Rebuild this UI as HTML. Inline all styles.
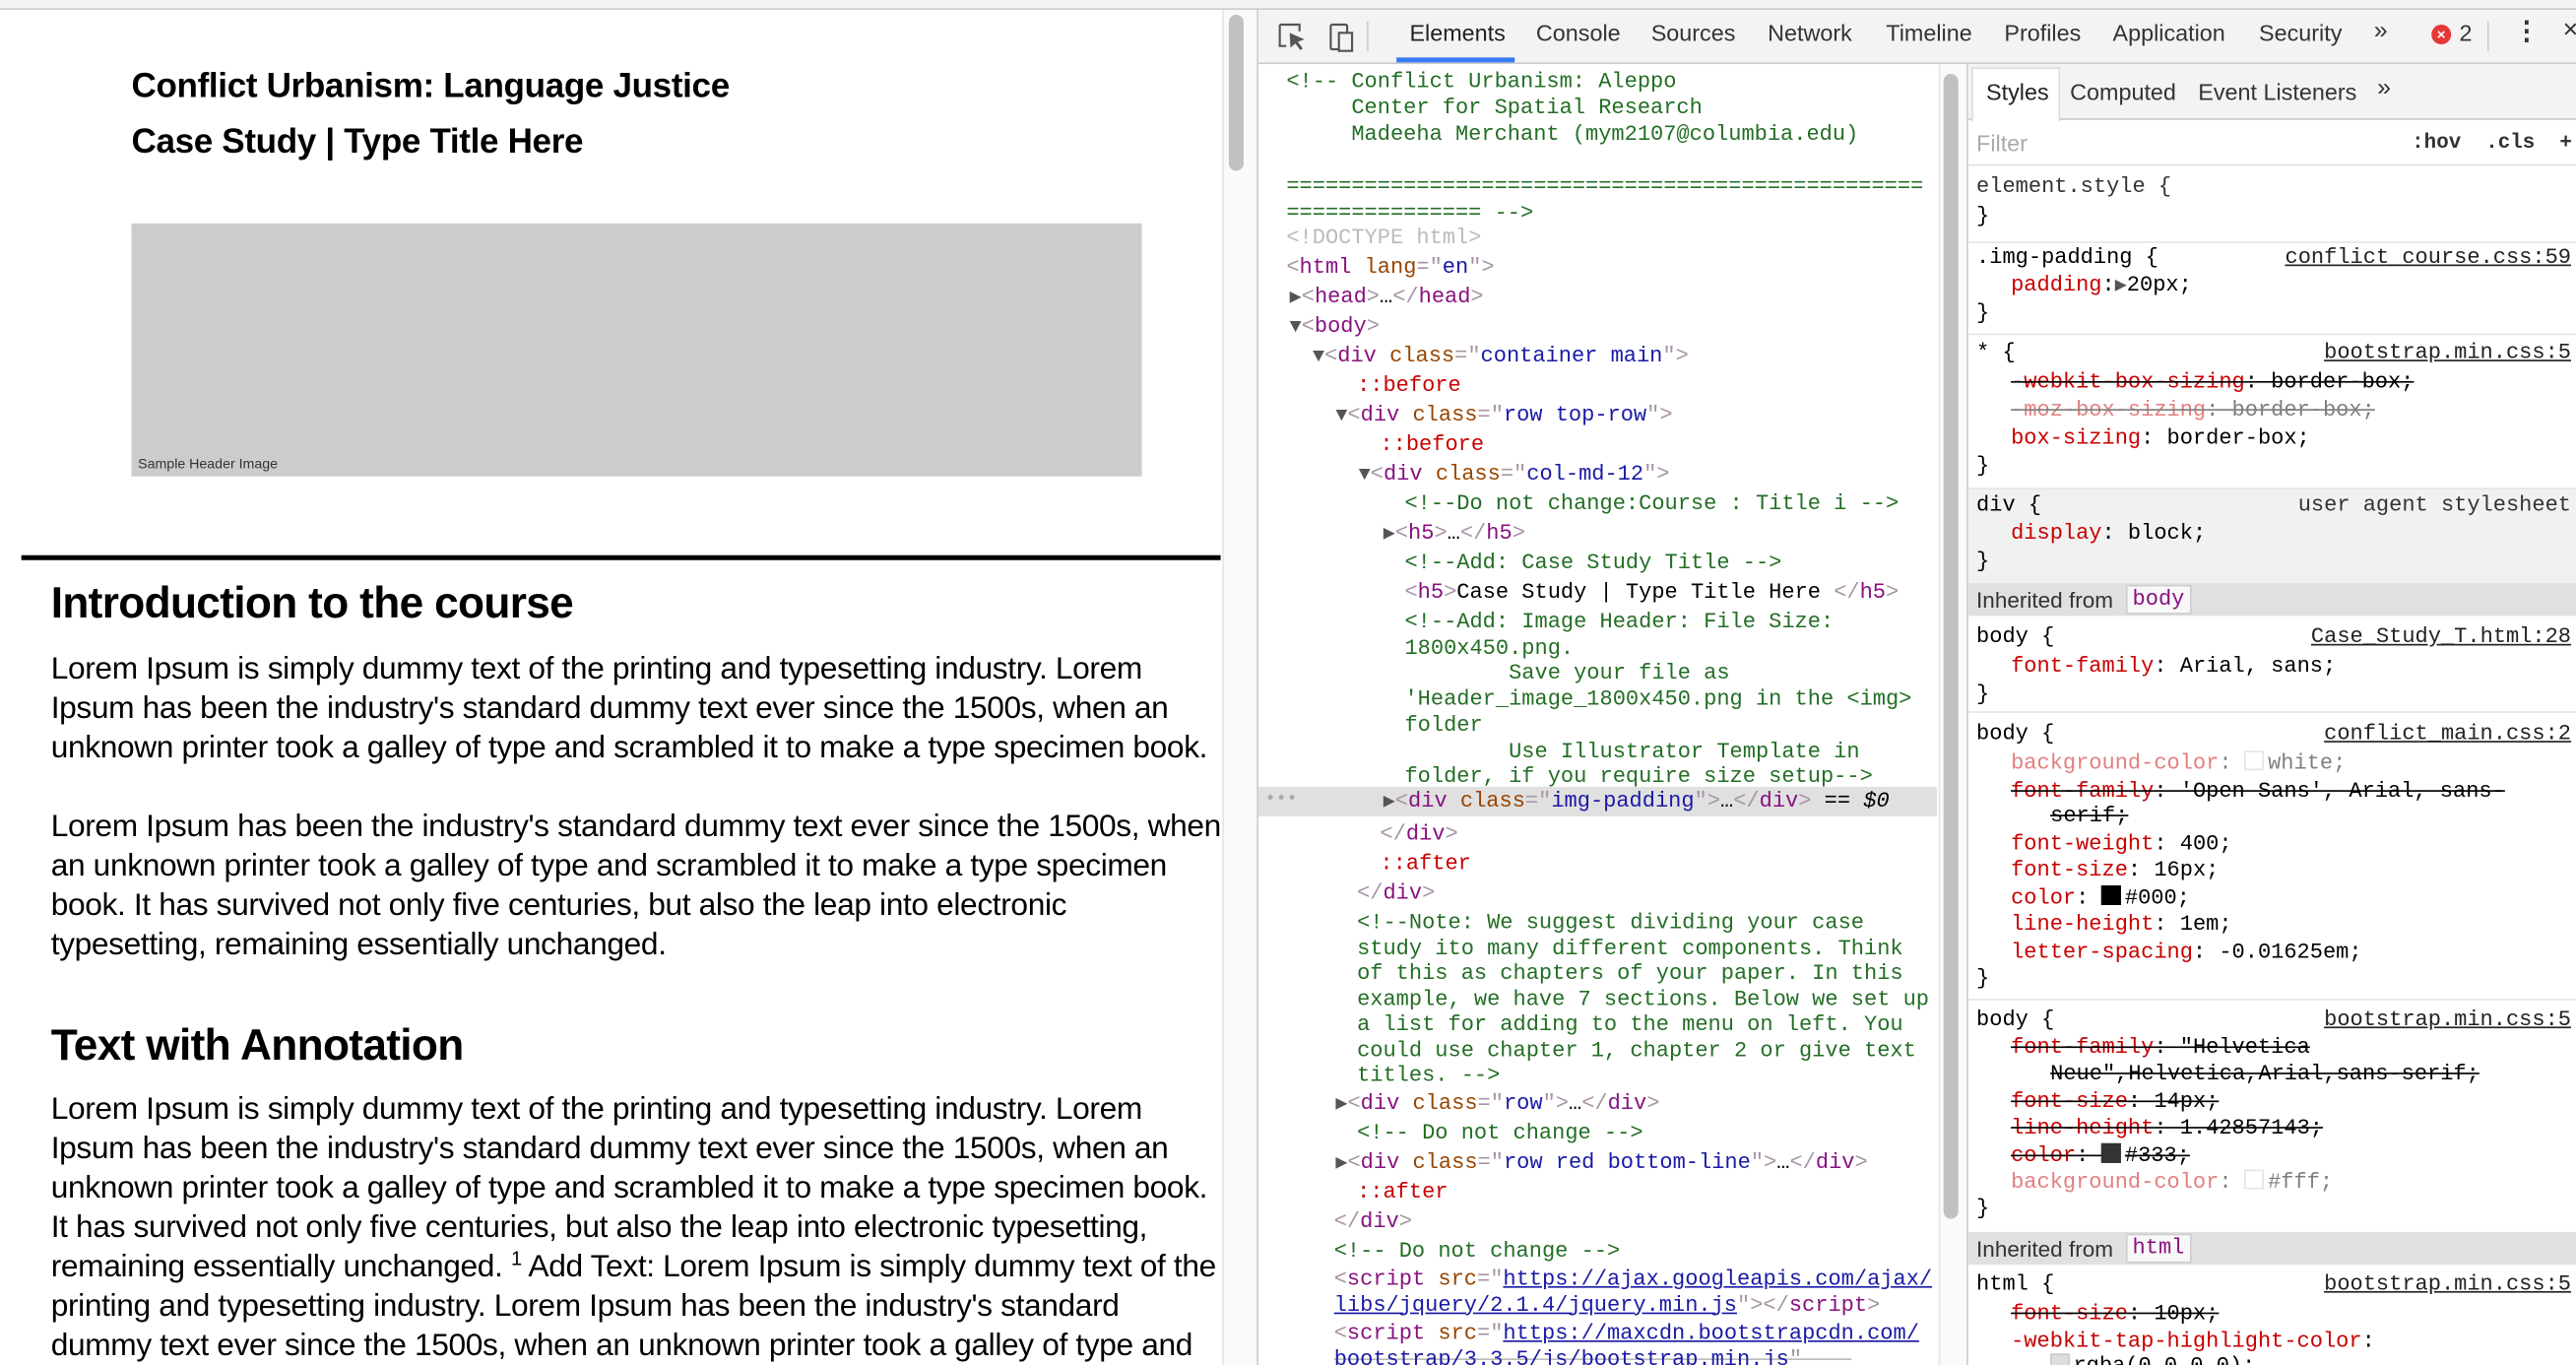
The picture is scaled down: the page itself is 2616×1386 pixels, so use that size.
<!DOCTYPE html>
<html><head><meta charset="utf-8">
<style>
html,body{margin:0;padding:0;width:2616px;height:1386px;overflow:hidden;background:#fff}
#w{position:absolute;left:0;top:0;width:1568px;height:831px;transform:scale(1.66837,1.66787);transform-origin:0 0;overflow:hidden;background:#fff}
.a{position:absolute;white-space:pre}
.s{font-family:"Liberation Sans",Arial,sans-serif}
.m{font-family:"Liberation Mono","DejaVu Sans Mono",monospace;font-size:13.2px;line-height:18px;height:18px}
.p{font-family:"Liberation Sans",Arial,sans-serif;font-size:19px;letter-spacing:-0.22px;color:#000}
.h2{font-family:"Liberation Sans",Arial,sans-serif;font-size:26.5px;font-weight:bold;letter-spacing:-0.4px}
.tg{color:#881280}.br{color:#a894a6}.at{color:#994500}.av{color:#1a1aa6}.cm{color:#236e25}.ps{color:#c80000}.dt{color:#bbb}
.tri{color:#555;font-size:12px}
.pr{color:#c80000}.val{color:#222}.st{text-decoration:line-through}.fd{opacity:.5}
.lnk{color:#222;text-decoration:underline;right:3px}
.sw{display:inline-block;width:10px;height:10px;border:1px solid #ccc;vertical-align:-1px;margin-right:2px}
.tab{position:absolute;top:12px;font-family:"Liberation Sans",Arial,sans-serif;font-size:14px;color:#333}
.u{text-decoration:underline}
#el,#sty{position:absolute;left:0;top:2px;width:1568px;height:831px}
</style></head><body><div id="w">
<div class="a" style="left:0;top:0;width:1568px;height:5px;background:#f3f3f3;border-bottom:1px solid #ccc"></div>
<div class="a s" style="left:80px;top:41px;font-size:21px;font-weight:bold;letter-spacing:-0.2px">Conflict Urbanism: Language Justice</div>
<div class="a s" style="left:80px;top:75px;font-size:21px;font-weight:bold;letter-spacing:-0.2px">Case Study | Type Title Here</div>
<div class="a" style="left:80px;top:136px;width:615px;height:154px;background:#cccccc"></div>
<div class="a s" style="left:84px;top:277px;font-size:8.5px;color:#333">Sample Header Image</div>
<div class="a" style="left:13px;top:338px;width:730px;height:3px;background:#000"></div>
<div class="a h2" style="left:31px;top:352px">Introduction to the course</div>
<div class="a p" style="left:31px;top:396px;line-height:24px">Lorem Ipsum is simply dummy text of the printing and typesetting industry. Lorem
Ipsum has been the industry's standard dummy text ever since the 1500s, when an
unknown printer took a galley of type and scrambled it to make a type specimen book.</div>
<div class="a p" style="left:31px;top:492px;line-height:24px">Lorem Ipsum has been the industry's standard dummy text ever since the 1500s, when
an unknown printer took a galley of type and scrambled it to make a type specimen
book. It has survived not only five centuries, but also the leap into electronic
typesetting, remaining essentially unchanged.</div>
<div class="a h2" style="left:31px;top:621px">Text with Annotation</div>
<div class="a p" style="left:31px;top:664px;line-height:24px">Lorem Ipsum is simply dummy text of the printing and typesetting industry. Lorem
Ipsum has been the industry's standard dummy text ever since the 1500s, when an
unknown printer took a galley of type and scrambled it to make a type specimen book.
It has survived not only five centuries, but also the leap into electronic typesetting,
remaining essentially unchanged. <span style="font-size:12px;position:relative;top:-7px;line-height:0">1</span> Add Text: Lorem Ipsum is simply dummy text of the
printing and typesetting industry. Lorem Ipsum has been the industry's standard
dummy text ever since the 1500s, when an unknown printer took a galley of type and</div>
<div class="a" style="left:744px;top:6px;width:20px;height:825px;background:#fafafa;border-left:1px solid #e6e6e6"></div>
<div class="a" style="left:748px;top:9px;width:9px;height:95px;background:#c1c1c1;border-radius:5px"></div>
<div class="a" style="left:765px;top:6px;width:803px;height:825px;background:#fff;border-left:1px solid #ccc"></div>
<div class="a" style="left:766px;top:6px;width:802px;height:32px;background:#f3f3f3;border-bottom:1px solid #ccc"></div>
<svg class="a" style="left:776px;top:12px" width="60" height="22" viewBox="0 0 60 22"><path d="M3 3h12v4M3 3v13h4" fill="none" stroke="#555" stroke-width="1.3"/><path d="M9 8l9 4-4 1.5 3 4-1.5 1-3-4-3 2.5z" fill="#555"/><rect x="34" y="3" width="10" height="15" rx="1" fill="none" stroke="#555" stroke-width="1.3"/><rect x="39" y="8" width="8" height="11" fill="#f3f3f3" stroke="#555" stroke-width="1.3"/></svg>
<div class="a" style="left:832px;top:13px;width:1px;height:18px;background:#ccc"></div>
<div class="tab" style="left:858px;color:#222">Elements</div>
<div class="a" style="left:850px;top:35px;width:72px;height:3px;background:#3879f5"></div>
<div class="tab" style="left:935px">Console</div>
<div class="tab" style="left:1005px">Sources</div>
<div class="tab" style="left:1076px">Network</div>
<div class="tab" style="left:1148px">Timeline</div>
<div class="tab" style="left:1220px">Profiles</div>
<div class="tab" style="left:1286px">Application</div>
<div class="tab" style="left:1375px">Security</div>
<div class="tab" style="left:1445px;font-size:15px;top:10px">»</div>
<div class="a" style="left:1480px;top:15px;width:12px;height:12px;border-radius:6px;background:#e53935;color:#fff;font:bold 9px/12px 'Liberation Sans',sans-serif;text-align:center">×</div>
<div class="tab" style="left:1497px">2</div>
<div class="a" style="left:1514px;top:13px;width:1px;height:18px;background:#ccc"></div>
<div class="tab" style="left:1530px;font-weight:bold;font-size:16px;top:9px">⋮</div>
<div class="tab" style="left:1560px;font-size:16px;top:10px">×</div>
<div class="a" style="left:1180px;top:39px;width:16px;height:792px;background:#fafafa;border-left:1px solid #e6e6e6"></div>
<div class="a" style="left:1183px;top:45px;width:9px;height:697px;background:#c1c1c1;border-radius:5px"></div>
<div class="a" style="left:1197px;top:39px;width:1px;height:792px;background:#ccc"></div>
<div class="a" style="left:766px;top:479px;width:413px;height:18px;background:#e0e0e0"></div>
<div class="a" style="left:812px;top:827px;width:315px;height:4px;background:#fff;border-top:1px solid #bbb"></div>
<div id="el">
<div class="a m" style="left:770px;top:476px;color:#aaa;font-size:11px">•••</div>
<div class="a m cm" style="left:783px;top:40px;line-height:16px;height:auto">&lt;!-- Conflict Urbanism: Aleppo
     Center for Spatial Research
     Madeeha Merchant (mym2107@columbia.edu)

=================================================
=============== --&gt;</div>
<div class="a m dt" style="left:783px;top:134px">&lt;!DOCTYPE html&gt;</div>
<div class="a m" style="left:783px;top:152px"><span class="br">&lt;</span><span class="tg">html</span> <span class="at">lang</span><span class="br">="</span><span class="av">en</span><span class="br">"&gt;</span></div>
<div class="a m" style="left:785px;top:170px"><span class="tri">▶</span><span class="br">&lt;</span><span class="tg">head</span><span class="br">&gt;</span>…<span class="br">&lt;/</span><span class="tg">head</span><span class="br">&gt;</span></div>
<div class="a m" style="left:785px;top:188px"><span class="tri">▼</span><span class="br">&lt;</span><span class="tg">body</span><span class="br">&gt;</span></div>
<div class="a m" style="left:799px;top:206px"><span class="tri">▼</span><span class="br">&lt;</span><span class="tg">div</span> <span class="at">class</span><span class="br">="</span><span class="av">container main</span><span class="br">"&gt;</span></div>
<div class="a m ps" style="left:826px;top:224px">::before</div>
<div class="a m" style="left:813px;top:242px"><span class="tri">▼</span><span class="br">&lt;</span><span class="tg">div</span> <span class="at">class</span><span class="br">="</span><span class="av">row top-row</span><span class="br">"&gt;</span></div>
<div class="a m ps" style="left:840px;top:260px">::before</div>
<div class="a m" style="left:827px;top:278px"><span class="tri">▼</span><span class="br">&lt;</span><span class="tg">div</span> <span class="at">class</span><span class="br">="</span><span class="av">col-md-12</span><span class="br">"&gt;</span></div>
<div class="a m cm" style="left:855px;top:296px">&lt;!--Do not change:Course : Title i --&gt;</div>
<div class="a m" style="left:842px;top:314px"><span class="tri">▶</span><span class="br">&lt;</span><span class="tg">h5</span><span class="br">&gt;</span>…<span class="br">&lt;/</span><span class="tg">h5</span><span class="br">&gt;</span></div>
<div class="a m cm" style="left:855px;top:332px">&lt;!--Add: Case Study Title --&gt;</div>
<div class="a m" style="left:855px;top:350px"><span class="br">&lt;</span><span class="tg">h5</span><span class="br">&gt;</span>Case Study | Type Title Here <span class="br">&lt;/</span><span class="tg">h5</span><span class="br">&gt;</span></div>
<div class="a m cm" style="left:855px;top:369px;line-height:15.7px;height:auto">&lt;!--Add: Image Header: File Size:
1800x450.png.
        Save your file as
'Header_image_1800x450.png in the &lt;img&gt;
folder
        Use Illustrator Template in
folder, if you require size setup--&gt;</div>
<div class="a m" style="left:842px;top:477px"><span class="tri">▶</span><span class="br">&lt;</span><span class="tg">div</span> <span class="at">class</span><span class="br">="</span><span class="av">img-padding</span><span class="br">"&gt;</span>…<span class="br">&lt;/</span><span class="tg">div</span><span class="br">&gt;</span> == <i>$0</i></div>
<div class="a m" style="left:840px;top:497px"><span class="br">&lt;/</span><span class="tg">div</span><span class="br">&gt;</span></div>
<div class="a m ps" style="left:840px;top:515px">::after</div>
<div class="a m" style="left:826px;top:533px"><span class="br">&lt;/</span><span class="tg">div</span><span class="br">&gt;</span></div>
<div class="a m cm" style="left:826px;top:552px;line-height:15.5px;height:auto">&lt;!--Note: We suggest dividing your case
study ito many different components. Think
of this as chapters of your paper. In this
example, we have 7 sections. Below we set up
a list for adding to the menu on left. You
could use chapter 1, chapter 2 or give text
titles. --&gt;</div>
<div class="a m" style="left:813px;top:661px"><span class="tri">▶</span><span class="br">&lt;</span><span class="tg">div</span> <span class="at">class</span><span class="br">="</span><span class="av">row</span><span class="br">"&gt;</span>…<span class="br">&lt;/</span><span class="tg">div</span><span class="br">&gt;</span></div>
<div class="a m cm" style="left:826px;top:679px">&lt;!-- Do not change --&gt;</div>
<div class="a m" style="left:813px;top:697px"><span class="tri">▶</span><span class="br">&lt;</span><span class="tg">div</span> <span class="at">class</span><span class="br">="</span><span class="av">row red bottom-line</span><span class="br">"&gt;</span>…<span class="br">&lt;/</span><span class="tg">div</span><span class="br">&gt;</span></div>
<div class="a m ps" style="left:826px;top:715px">::after</div>
<div class="a m" style="left:812px;top:733px"><span class="br">&lt;/</span><span class="tg">div</span><span class="br">&gt;</span></div>
<div class="a m cm" style="left:812px;top:751px">&lt;!-- Do not change --&gt;</div>
<div class="a m" style="left:812px;top:769px;line-height:15.5px;height:auto"><span class="br">&lt;</span><span class="tg">script</span> <span class="at">src</span><span class="br">="</span><span class="av u">https://ajax.googleapis.com/ajax/</span>
<span class="av u">libs/jquery/2.1.4/jquery.min.js</span><span class="br">"&gt;&lt;/</span><span class="tg">script</span><span class="br">&gt;</span></div>
<div class="a m" style="left:812px;top:802px;line-height:15.5px;height:auto"><span class="br">&lt;</span><span class="tg">script</span> <span class="at">src</span><span class="br">="</span><span class="av u">https://maxcdn.bootstrapcdn.com/</span>
<span class="av u">bootstrap/3.3.5/js/bootstrap.min.js</span><span class="br">"</span></div>
</div>
<div class="a" style="left:1198px;top:39px;width:370px;height:33px;background:#f3f3f3;border-bottom:1px solid #ccc"></div>
<div class="a" style="left:1200px;top:41px;width:52px;height:32px;background:#fff;border:1px solid #ddd;border-bottom:none"></div>
<div class="tab" style="left:1209px;top:48px;color:#222">Styles</div>
<div class="tab" style="left:1260px;top:48px">Computed</div>
<div class="tab" style="left:1338px;top:48px">Event Listeners</div>
<div class="tab" style="left:1447px;top:45px;font-size:15px">»</div>
<div class="tab" style="left:1203px;top:79px;color:#aaa">Filter</div>
<div class="a m" style="left:1468px;top:78px;font-weight:bold;color:#333;font-size:12.5px">:hov  .cls  +</div>
<div class="a" style="left:1198px;top:100px;width:370px;height:1px;background:#e0e0e0"></div>
<div class="a" style="left:1198px;top:147px;width:370px;height:1px;background:#e6e6e6"></div>
<div class="a" style="left:1198px;top:203px;width:370px;height:1px;background:#e6e6e6"></div>
<div class="a" style="left:1198px;top:297px;width:370px;height:58px;background:#f1f1f1;border-top:1px solid #e6e6e6"></div>
<div class="a" style="left:1198px;top:355px;width:370px;height:20px;background:#e0e0e0"></div>
<div class="a" style="left:1198px;top:433px;width:370px;height:1px;background:#e6e6e6"></div>
<div class="a" style="left:1198px;top:608px;width:370px;height:1px;background:#e6e6e6"></div>
<div class="a" style="left:1198px;top:750px;width:370px;height:20px;background:#e0e0e0"></div>
<div id="sty">
<div class="a m" style="left:1203px;top:103px;color:#333">element.style {</div>
<div class="a m" style="left:1203px;top:121px">}</div>
<div class="a m" style="left:1203px;top:146px">.img-padding {</div>
<div class="a m lnk" style="top:146px">conflict_course.css:59</div>
<div class="a m" style="left:1224px;top:163px"><span class="pr">padding</span>:<span class="tri">▶</span>20px;</div>
<div class="a m" style="left:1203px;top:180px">}</div>
<div class="a m" style="left:1203px;top:204px">* {</div>
<div class="a m lnk" style="top:204px">bootstrap.min.css:5</div>
<div class="a m st" style="left:1224px;top:222px"><span class="pr">-webkit-box-sizing</span>: border-box;</div>
<div class="a m st fd" style="left:1224px;top:239px"><span class="pr">-moz-box-sizing</span>: border-box;</div>
<div class="a m" style="left:1224px;top:256px"><span class="pr">box-sizing</span>: border-box;</div>
<div class="a m" style="left:1203px;top:273px">}</div>
<div class="a m" style="left:1203px;top:297px">div {</div>
<div class="a m" style="right:3px;top:297px;color:#333">user agent stylesheet</div>
<div class="a m" style="left:1224px;top:314px"><span class="pr">display</span>: block;</div>
<div class="a m" style="left:1203px;top:331px">}</div>
<div class="a s" style="left:1203px;top:356px;font-size:13.5px;color:#333">Inherited from</div>
<div class="a m tg" style="left:1294px;top:354px;background:#f8f8f8;border:1px solid #ccc;padding:0 3px;line-height:16px;height:16px">body</div>
<div class="a m" style="left:1203px;top:377px">body {</div>
<div class="a m lnk" style="top:377px">Case_Study_T.html:28</div>
<div class="a m" style="left:1224px;top:395px"><span class="pr">font-family</span>: Arial, sans;</div>
<div class="a m" style="left:1203px;top:412px">}</div>
<div class="a m" style="left:1203px;top:436px">body {</div>
<div class="a m lnk" style="top:436px">conflict_main.css:2</div>
<div class="a m fd" style="left:1224px;top:454px"><span class="pr">background-color</span>: <span class="sw" style="background:#fff"></span>white;</div>
<div class="a m st" style="left:1224px;top:471px"><span class="pr">font-family</span>: 'Open Sans', Arial, sans-</div>
<div class="a m st" style="left:1248px;top:486px">serif;</div>
<div class="a m" style="left:1224px;top:503px"><span class="pr">font-weight</span>: 400;</div>
<div class="a m" style="left:1224px;top:519px"><span class="pr">font-size</span>: 16px;</div>
<div class="a m" style="left:1224px;top:536px"><span class="pr">color</span>: <span class="sw" style="background:#000;border-color:#000"></span>#000;</div>
<div class="a m" style="left:1224px;top:552px"><span class="pr">line-height</span>: 1em;</div>
<div class="a m" style="left:1224px;top:569px"><span class="pr">letter-spacing</span>: -0.01625em;</div>
<div class="a m" style="left:1203px;top:585px">}</div>
<div class="a m" style="left:1203px;top:610px">body {</div>
<div class="a m lnk" style="top:610px">bootstrap.min.css:5</div>
<div class="a m st" style="left:1224px;top:627px"><span class="pr">font-family</span>: "Helvetica</div>
<div class="a m st" style="left:1248px;top:643px">Neue",Helvetica,Arial,sans-serif;</div>
<div class="a m st" style="left:1224px;top:660px"><span class="pr">font-size</span>: 14px;</div>
<div class="a m st" style="left:1224px;top:676px"><span class="pr">line-height</span>: 1.42857143;</div>
<div class="a m st" style="left:1224px;top:693px"><span class="pr">color</span>: <span class="sw" style="background:#333;border-color:#333"></span>#333;</div>
<div class="a m fd" style="left:1224px;top:709px"><span class="pr">background-color</span>: <span class="sw" style="background:#fff"></span>#fff;</div>
<div class="a m" style="left:1203px;top:725px">}</div>
<div class="a s" style="left:1203px;top:751px;font-size:13.5px;color:#333">Inherited from</div>
<div class="a m tg" style="left:1294px;top:749px;background:#f8f8f8;border:1px solid #ccc;padding:0 3px;line-height:16px;height:16px">html</div>
<div class="a m" style="left:1203px;top:771px">html {</div>
<div class="a m lnk" style="top:771px">bootstrap.min.css:5</div>
<div class="a m st" style="left:1224px;top:789px"><span class="pr">font-size</span>: 10px;</div>
<div class="a m" style="left:1224px;top:806px"><span class="pr">-webkit-tap-highlight-color</span>:</div>
<div class="a m" style="left:1248px;top:821px"><span class="sw" style="background:#ddd"></span>rgba(0,0,0,0);</div>
</div>
</div></body></html>
